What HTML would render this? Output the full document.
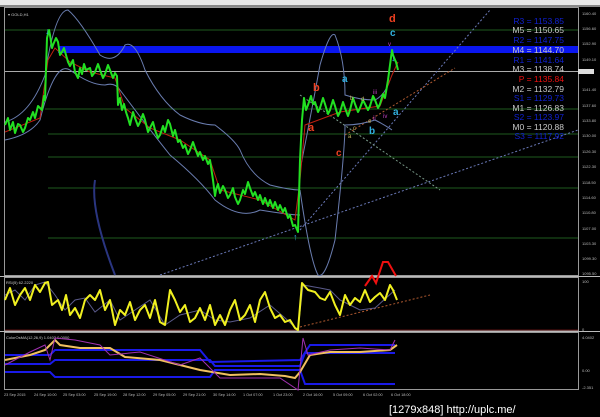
<!DOCTYPE html><html><head><style>
body{margin:0;background:#000;width:600px;height:417px;overflow:hidden;font-family:"Liberation Sans",sans-serif}
svg{display:block}
text{font-family:"Liberation Sans",sans-serif}
</style></head><body>
<svg width="600" height="417" viewBox="0 0 600 417">
<rect width="600" height="417" fill="#000"/>
<rect x="0" y="0" width="600" height="5" fill="#e8e8e8"/>
<rect x="0" y="5" width="600" height="2" fill="#888"/>
<rect x="4.5" y="7.5" width="574" height="268" fill="none" stroke="#999"/>
<rect x="4.5" y="277.5" width="574" height="53" fill="none" stroke="#999"/>
<rect x="4.5" y="332.5" width="574" height="57" fill="none" stroke="#999"/>
<line x1="0" y1="276.5" x2="600" y2="276.5" stroke="#bbb"/>
<line x1="0" y1="331.5" x2="600" y2="331.5" stroke="#bbb"/>
<g stroke="#1e5a1e" stroke-width="1">
<line x1="5" y1="30" x2="578" y2="30"/>
<line x1="45" y1="109" x2="578" y2="109"/>
<line x1="48" y1="134" x2="578" y2="134"/>
<line x1="48" y1="157" x2="578" y2="157"/>
<line x1="48" y1="188" x2="578" y2="188"/>
<line x1="48" y1="238" x2="578" y2="238"/>
</g>
<line x1="5" y1="71.5" x2="578" y2="71.5" stroke="#aaa"/>
<rect x="58" y="46" width="520" height="7" fill="#0a16f0"/>
<g stroke-dasharray="2,2" fill="none">
<line x1="300" y1="230" x2="490" y2="10" stroke="#6a79b8"/>
<line x1="160" y1="275" x2="578" y2="130" stroke="#6a79b8"/>
<line x1="300" y1="95" x2="440" y2="190" stroke="#7a9a8a"/>
<line x1="345" y1="135" x2="455" y2="68" stroke="#b05a30"/>
<line x1="300" y1="327" x2="430" y2="295" stroke="#b05a30"/>
</g>
<g fill="none" stroke="#6a7db0" stroke-width="1">
<path d="M5,122 Q30,115 45,75 Q55,10 68,10 Q80,20 100,55 Q115,65 125,45 Q135,40 145,70 Q160,100 180,115 Q200,125 215,125 Q235,140 240,150 Q250,175 270,185 Q290,190 300,190"/>
<path d="M5,140 Q30,135 40,120 Q55,60 70,70 Q90,85 105,85 Q115,82 120,90 Q150,130 170,155 Q200,180 215,200 Q240,220 260,210 Q290,215 300,215"/>
<path d="M300,170 Q310,120 320,65 Q330,30 335,35 Q345,60 345,95 Q360,100 375,100 Q385,95 390,80"/>
<path d="M300,190 Q310,260 318,275 Q325,280 335,240 Q345,150 345,125 Q360,125 375,120 Q385,125 392,130"/>
<path d="M95,180 Q90,210 115,275" stroke="#2a3580" stroke-width="2"/>
</g>
<path d="M5,132 L40,118 L48,60 L55,48 L70,62 L90,72 L115,78 L125,108 L150,128 L180,140 L210,160 L220,190 L260,200 L295,220 L300,180 L305,125 L340,112 L380,106 L392,75 L398,62" fill="none" stroke="#c02010" stroke-width="1"/>
<path d="M5,125 L8,118 L10,130 L13,122 L15,133 L18,124 L20,125 L23,132 L25,128 L28,118 L30,120 L33,112 L35,118 L38,106 L42,110 L44,96 L45,100 L47,38 L49,30 L50,35 L52,48 L53,45 L56,38 L58,42 L60,55 L62,52 L64,48 L66,55 L68,62 L70,66 L73,60 L75,72 L78,78 L80,68 L82,74 L84,64 L86,70 L90,68 L92,76 L95,72 L98,64 L100,70 L103,78 L105,74 L108,65 L110,70 L113,78 L115,73 L117,76 L118,105 L120,98 L122,110 L124,104 L126,112 L128,118 L130,125 L133,112 L135,118 L138,126 L140,122 L143,114 L145,120 L148,132 L150,128 L153,122 L155,130 L158,138 L160,135 L163,126 L165,132 L168,120 L170,124 L173,136 L175,130 L178,142 L180,140 L183,148 L185,145 L188,154 L190,150 L193,142 L195,148 L198,156 L200,152 L203,160 L205,156 L208,164 L210,160 L213,180 L215,196 L216,190 L218,184 L220,193 L223,186 L225,190 L228,198 L230,195 L233,188 L235,197 L238,204 L240,200 L243,190 L245,194 L248,182 L250,188 L253,196 L255,192 L258,200 L260,195 L263,204 L265,198 L268,206 L270,200 L273,208 L275,202 L278,210 L280,205 L283,212 L285,208 L288,218 L290,215 L293,226 L295,225 L298,232 L300,160 L302,120 L304,98 L306,110 L308,105 L311,96 L313,104 L315,102 L318,112 L320,108 L323,98 L325,104 L328,114 L330,110 L333,100 L335,106 L338,116 L340,112 L343,102 L345,108 L348,116 L350,110 L353,98 L355,104 L358,112 L360,108 L363,100 L365,104 L368,110 L370,106 L373,96 L375,100 L378,108 L380,104 L383,94 L385,98 L388,80 L390,65 L392,50 L393,55 L395,60 L396,62 L398,70" fill="none" stroke="#22e022" stroke-width="2" stroke-linejoin="round"/>
<g font-size="11" font-weight="bold">
<text x="389" y="22" fill="#f04020">d</text>
<text x="390" y="36" fill="#30b0e0" font-size="10">c</text>
<text x="313" y="91" fill="#f04020">b</text>
<text x="342" y="82" fill="#30b0e0" font-size="10">a</text>
<text x="308" y="131" fill="#f04020">a</text>
<text x="336" y="156" fill="#f04020" font-size="10">c</text>
<text x="369" y="134" fill="#30b0e0" font-size="10">b</text>
<text x="393" y="115" fill="#30b0e0" font-size="10">a</text>
</g>
<g font-size="6" fill="#c0b060"><text x="350" y="100">b</text><text x="361" y="101">d</text><text x="353" y="130">c</text><text x="348" y="138">a</text><text x="368" y="123">e</text></g>
<g font-size="6" fill="#c040c0"><text x="373" y="94">iii</text><text x="373" y="120">ii</text><text x="383" y="118">iv</text><text x="388" y="46">v</text></g>
<text x="391" y="61" fill="#30b0e0" font-size="9">↓</text>
<text x="45" y="34" fill="#30b0e0" font-size="9">↓</text>
<text x="293" y="240" fill="#30b0e0" font-size="9">↑</text>
<text x="8" y="16" fill="#ccc" font-size="4">▾ GOLD,H1</text>
<g font-size="8.5" text-anchor="end">
<text x="564" y="24" fill="#1020d0">R3 = 1153.85</text>
<text x="564" y="33" fill="#c8c8c8">M5 = 1150.65</text>
<text x="564" y="43" fill="#1020d0">R2 = 1147.75</text>
<text x="564" y="53" fill="#c8c8c8">M4 = 1144.70</text>
<text x="564" y="63" fill="#1020d0">R1 = 1141.64</text>
<text x="564" y="72" fill="#c8c8c8">M3 = 1138.74</text>
<text x="564" y="82" fill="#f01010">P = 1135.84</text>
<text x="564" y="92" fill="#c8c8c8">M2 = 1132.79</text>
<text x="564" y="101" fill="#1020d0">S1 = 1129.73</text>
<text x="564" y="111" fill="#c8c8c8">M1 = 1126.83</text>
<text x="564" y="120" fill="#1020d0">S2 = 1123.97</text>
<text x="564" y="130" fill="#c8c8c8">M0 = 1120.88</text>
<text x="564" y="139" fill="#1020d0">S3 = 1117.92</text>
</g>
<g font-size="4" fill="#bbb">
<text x="582" y="15">1160.40</text><text x="582" y="30">1156.60</text><text x="582" y="45">1152.90</text><text x="582" y="61">1149.10</text><text x="582" y="91">1141.40</text><text x="582" y="107">1137.60</text><text x="582" y="122">1133.80</text><text x="582" y="137">1130.00</text><text x="582" y="153">1126.30</text><text x="582" y="168">1122.30</text><text x="582" y="184">1118.50</text><text x="582" y="199">1114.60</text><text x="582" y="214">1110.80</text><text x="582" y="230">1107.00</text><text x="582" y="245">1103.30</text><text x="582" y="260">1099.30</text><text x="582" y="275">1095.50</text>
<text x="582" y="283">100</text><text x="582" y="331">0</text><text x="582" y="339">4.0402</text><text x="582" y="372">0.00</text><text x="582" y="389">-2.351</text>
</g>
<rect x="578" y="69" width="16" height="5" fill="#ddd"/>
<path d="M365,286 L372,276 L376,283 L383,262 L388,262 L396,276" fill="none" stroke="#f01010" stroke-width="2"/>
<text x="6" y="284" fill="#ccc" font-size="4">RSI(5) 62.2220</text>
<line x1="5" y1="330" x2="578" y2="330" stroke="#5a1010"/>
<path d="M5,295 L15,290 L25,300 L35,285 L45,282 L55,295 L65,310 L75,300 L85,298 L95,312 L110,300 L120,320 L135,310 L150,300 L165,325 L180,315 L200,310 L215,320 L230,322 L250,318 L270,305 L285,318 L298,330 L303,285 L320,288 L330,290 L340,300 L350,305 L360,310 L375,308 L395,290" fill="none" stroke="#5a5a8a" stroke-width="1"/>
<path d="M5,300 L10,288 L15,305 L20,295 L25,288 L30,300 L35,285 L40,292 L45,283 L48,282 L52,305 L58,300 L62,310 L66,295 L70,315 L75,308 L80,318 L85,300 L90,295 L95,300 L100,290 L105,310 L110,300 L115,325 L120,310 L125,315 L130,302 L135,320 L140,310 L145,305 L150,318 L155,300 L160,322 L165,325 L170,290 L175,300 L180,312 L185,305 L190,322 L195,318 L200,308 L205,320 L210,305 L215,325 L220,315 L225,325 L230,310 L235,300 L240,320 L245,315 L250,305 L255,322 L260,300 L265,292 L270,308 L275,318 L280,315 L285,322 L290,320 L295,328 L298,330 L302,283 L308,290 L315,292 L320,298 L325,300 L330,292 L335,305 L340,315 L345,295 L350,305 L355,298 L360,302 L365,290 L370,302 L375,297 L380,293 L385,300 L390,285 L393,290 L397,300" fill="none" stroke="#f0f020" stroke-width="2" stroke-linejoin="round"/>
<text x="6" y="339" fill="#ccc" font-size="4">ColorOsMA(12,26,9) 1.0403 0.0000</text>
<g fill="none" stroke="#1a1ae8" stroke-width="2">
<path d="M5,355 L50,355 L55,350 L200,350 L210,362 L300,360 L310,345 L395,345"/>
<path d="M5,364 L50,364 L55,360 L210,360 L215,366 L300,366 L305,353 L395,353"/>
<path d="M5,372 L50,372 L55,377 L210,377 L215,370 L300,370 L305,384 L395,384"/>
</g>
<path d="M5,360 L30,355 L45,350 L55,340 L60,345 L80,348 L110,348 L125,357 L160,360 L200,370 L230,375 L260,374 L285,376 L295,378 L300,372 L310,355 L330,352 L360,352 L390,350 L397,345" fill="none" stroke="#f0c060" stroke-width="2"/>
<path d="M5,365 L30,352 L45,345 L50,360 L55,338 L75,340 L100,345 L110,355 L140,352 L180,365 L200,358 L220,378 L280,378 L298,390 L303,338 L308,355 L330,350 L360,348 L390,350 L395,340" fill="none" stroke="#a030b0" stroke-width="1"/>
<g font-size="3.8" fill="#bbb">
<text x="4" y="396">23 Sep 2015</text><text x="34" y="396">24 Sep 10:00</text><text x="63" y="396">25 Sep 03:00</text><text x="94" y="396">25 Sep 19:00</text><text x="123" y="396">28 Sep 12:00</text><text x="153" y="396">29 Sep 05:00</text><text x="183" y="396">29 Sep 21:00</text><text x="213" y="396">30 Sep 14:00</text><text x="243" y="396">1 Oct 07:00</text><text x="273" y="396">1 Oct 23:00</text><text x="303" y="396">2 Oct 16:00</text><text x="333" y="396">5 Oct 09:00</text><text x="363" y="396">6 Oct 02:00</text><text x="391" y="396">6 Oct 18:00</text>
</g>
<text x="389" y="413" fill="#fff" font-size="11">[1279x848] http://uplc.me/</text>
</svg>
</body></html>
